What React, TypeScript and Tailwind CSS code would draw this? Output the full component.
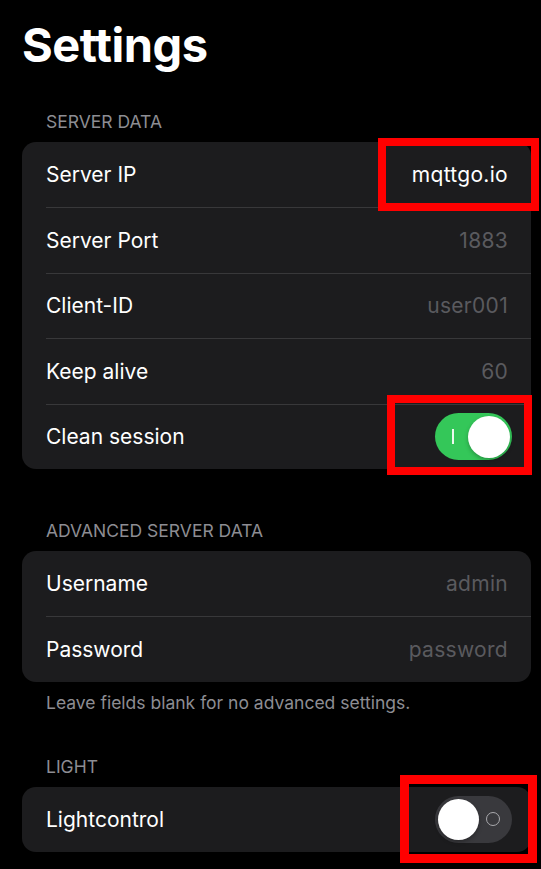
import React from "react";

type Row = { label: string; value?: string; valueWhite?: boolean; toggle?: "on" | "off" };

function ToggleOn() {
  return (
    <div className="relative flex h-[47px] w-[77px] items-center rounded-full bg-[#34c759]">
      <div className="ml-[17px] h-[15px] w-[2px] bg-white/90" />
      <div className="absolute right-[2px] top-[2.5px] h-[42px] w-[42px] rounded-full bg-white shadow-[0_2px_4px_rgba(0,0,0,0.25)]" />
    </div>
  );
}

function ToggleOff() {
  return (
    <div className="relative flex h-[47px] w-[77px] items-center rounded-full bg-[#39393d]">
      <div className="absolute left-[3px] top-[3px] h-[41px] w-[41px] rounded-full bg-white shadow-[0_2px_4px_rgba(0,0,0,0.3)]" />
      <div className="ml-[51px] h-[14px] w-[14px] rounded-full border-[1.5px] border-[#a9a9ad]" />
    </div>
  );
}

function Card({ rows }: { rows: Row[] }) {
  return (
    <div className="mr-[10px] ml-[22px] overflow-hidden rounded-[14px] bg-[#1c1c1e]">
      {rows.map((r, i) => (
        <div key={r.label} className="h-[65.4px] pl-[24px]">
          <div
            className={
              "flex h-full items-center justify-between " +
              (i > 0 ? "border-t border-[#38383a] " : "") +
              (r.toggle ? "pr-[19px]" : "pr-[23px]")
            }
          >
            <span className="text-[21px] text-white">{r.label}</span>
            {r.toggle === "on" && <ToggleOn />}
            {r.toggle === "off" && <ToggleOff />}
            {r.value && (
              <span
                className={
                  "text-[21px] tracking-[0.3px] " + (r.valueWhite ? "text-white" : "text-[#5a5a5e]")
                }
              >
                {r.value}
              </span>
            )}
          </div>
        </div>
      ))}
    </div>
  );
}

function Label({ children }: { children: React.ReactNode }) {
  return (
    <div className="ml-[46px] h-[20px] text-[17.5px] leading-[20px] text-[#8d8d93]">{children}</div>
  );
}

export default function App() {
  return (
    <div
      className="relative min-h-[869px] w-[541px] bg-black"
      style={{ fontFamily: "Inter, 'Noto Sans', sans-serif" }}
    >
      <div className="pt-[21px]">
        <h1 className="ml-[22px] h-[48px] text-[47px] leading-[48px] font-bold tracking-[-0.5px] text-white">
          Settings
        </h1>
        <div className="h-[43px]" />
        <Label>SERVER DATA</Label>
        <div className="h-[10px]" />
        <Card
          rows={[
            { label: "Server IP", value: "mqttgo.io", valueWhite: true },
            { label: "Server Port", value: "1883" },
            { label: "Client-ID", value: "user001" },
            { label: "Keep alive", value: "60" },
            { label: "Clean session", toggle: "on" },
          ]}
        />
        <div className="h-[52px]" />
        <Label>ADVANCED SERVER DATA</Label>
        <div className="h-[10px]" />
        <Card
          rows={[
            { label: "Username", value: "admin" },
            { label: "Password", value: "password" },
          ]}
        />
        <div className="ml-[46px] mt-[11px] h-[20px] text-[17.5px] leading-[20px] text-[#8d8d93]">
          Leave fields blank for no advanced settings.
        </div>
        <div className="h-[44px]" />
        <Label>LIGHT</Label>
        <div className="h-[10px]" />
        <Card rows={[{ label: "Lightcontrol", toggle: "off" }]} />
      </div>

      <div className="absolute left-[378px] top-[138px] h-[73px] w-[161px] border-[8px] border-[#ff0000]" />
      <div className="absolute left-[387px] top-[395px] h-[80px] w-[145px] border-[8px] border-[#ff0000]" />
      <div className="absolute left-[400px] top-[775px] h-[88px] w-[137px] border-[9px] border-[#ff0000]" />
    </div>
  );
}
